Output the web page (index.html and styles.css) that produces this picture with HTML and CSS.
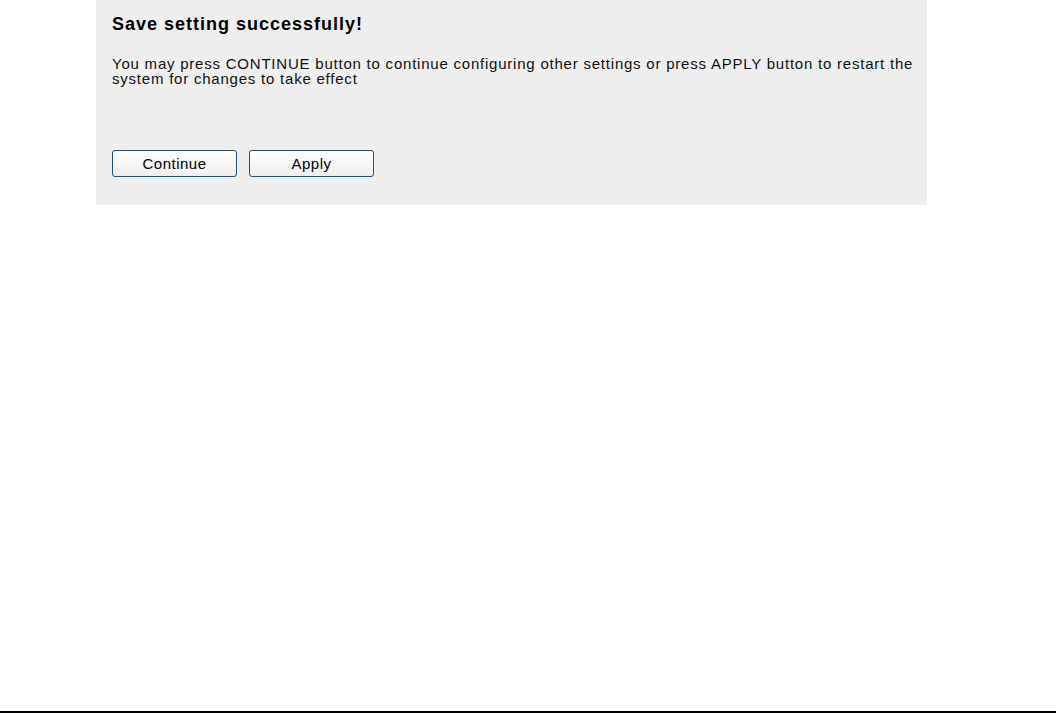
FILE: index.html
```html
<!DOCTYPE html>
<html>
<head>
    <title>Save Setting</title>
    <link rel="stylesheet" href="styles.css">
</head>
<body>
    <div class="panel">
        <h2 class="title">Save setting successfully!</h2>
        <p class="message">You may press CONTINUE button to continue configuring other settings or press APPLY button to restart the system for changes to take effect</p>
        <div class="buttons">
            <button class="btn">Continue</button>
            <button class="btn">Apply</button>
        </div>
    </div>
    <div class="bottom-line"></div>
</body>
</html>
```

FILE: styles.css
```css
html, body {
    margin: 0;
    padding: 0;
    height: 100%;
}

body {
    background-color: #ffffff;
    font-family: "Liberation Sans", Arial, sans-serif;
    color: #000000;
    display: flex;
    flex-direction: column;
}

.panel {
    box-sizing: border-box;
    width: 831px;
    height: 205px;
    margin-left: 96px;
    padding: 12px 0 0 16px;
    background-color: #eeeeee;
}

.title {
    margin: 0;
    font-size: 18px;
    font-weight: bold;
    letter-spacing: 1px;
    line-height: 24px;
}

.message {
    margin: 20px 0 0 0;
    width: 810px;
    font-size: 15px;
    letter-spacing: 0.78px;
    line-height: 15px;
    color: #111111;
}

.buttons {
    display: flex;
    gap: 12px;
    margin-top: 64px;
}

.btn {
    width: 125px;
    height: 27px;
    padding: 0;
    font-family: "Liberation Sans", Arial, sans-serif;
    font-size: 15px;
    letter-spacing: 0.5px;
    color: #000000;
    background: linear-gradient(#fefefe, #eeeeec);
    border: 1px solid #1c5180;
    border-radius: 3px;
}

.bottom-line {
    margin-top: auto;
    height: 2px;
    background-color: #000000;
}
```
